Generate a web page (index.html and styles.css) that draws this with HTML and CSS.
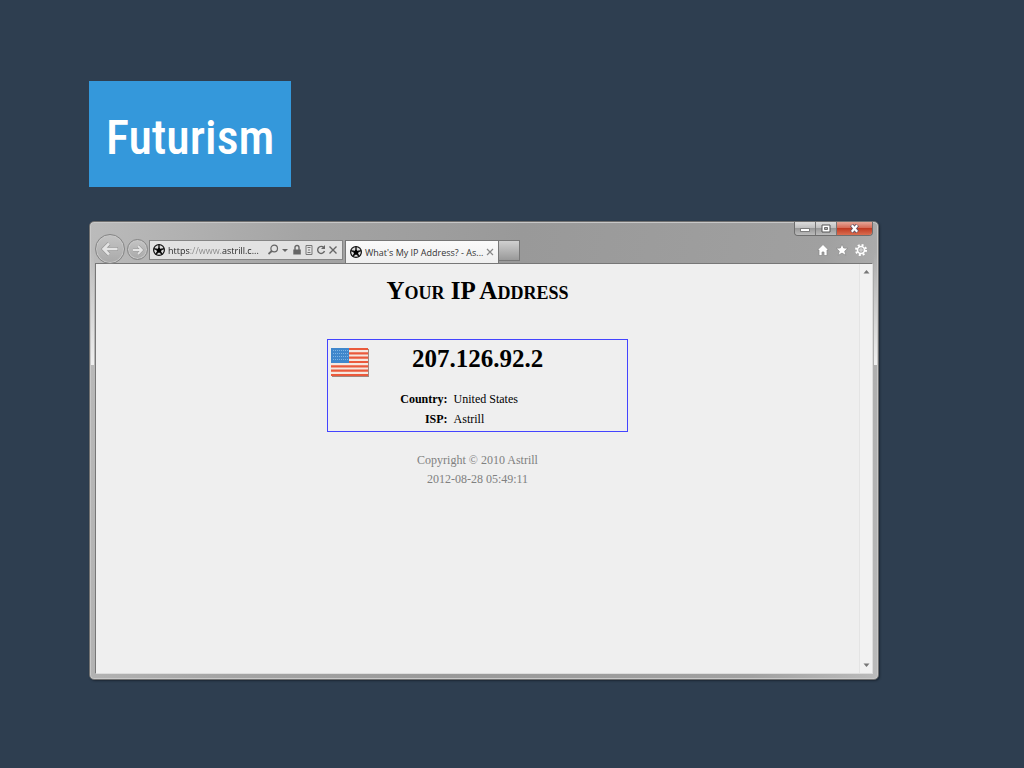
FILE: index.html
```
<!DOCTYPE html>
<html lang="en">
<head>
  <meta charset="UTF-8" />
  <meta name="viewport" content="width=device-width, initial-scale=1.0" />
  <title>Futurism</title>
  <link rel="stylesheet" href="styles.css">
</head>
<body>
  <svg class="symbols" width="0" height="0">
    <symbol id="ball" viewBox="0 0 12 12">
      <circle cx="6" cy="6" r="5.4" fill="#ddd" stroke="#111" stroke-width="1.2"/>
      <path d="M6 2.2l1.2 2.5 2.7.4-1.9 2 .5 2.8L6 8.600l-2.500 1.300.5-2.800-1.900-2 2.700-.4z" fill="#000"/>
      <path d="M6 .6v3M11.200 4.600L8 5.500M9.400 10.600L7.500 8M2.600 10.600L4.500 8M.8 4.600L4 5.500" stroke="#111" stroke-width="1.300"/>
    </symbol>
  </svg>

  <main class="page">
    <h1 class="brand">Futurism</h1>

    <section class="window">
      <header class="toolbar">
        <button class="nav-button back" aria-label="Back">
          <svg width="18" height="14" viewBox="0 0 18 14"><path d="M17 7H3M8 1.500L2.500 7 8 12.500" fill="none" stroke="#999" stroke-width="4"/><path d="M16.500 7H3M8 1.500L2.500 7 8 12.500" fill="none" stroke="#e4e4e4" stroke-width="2.500"/></svg>
        </button>
        <button class="nav-button forward" aria-label="Forward">
          <svg width="12" height="10" viewBox="0 0 12 10"><path d="M1 5h9M6 1l4 4-4 4" fill="none" stroke="#999" stroke-width="3"/><path d="M1 5h9M6 1l4 4-4 4" fill="none" stroke="#e4e4e4" stroke-width="1.800"/></svg>
        </button>

        <div class="address">
          <svg width="12" height="12"><use href="#ball"/></svg>
          <input class="url" type="text" value="https://www.astrill.c..." aria-label="Address">
          <button aria-label="Search"><svg width="12" height="12" viewBox="0 0 12 12"><circle cx="7.200" cy="4.500" r="3.300" fill="none" stroke="#666" stroke-width="1.200"/><path d="M4.800 7L1.500 10" stroke="#666" stroke-width="1.700"/></svg></button>
          <button aria-label="Show list"><svg width="12" height="12" viewBox="0 0 12 12"><path d="M3 5h6L6 8z" fill="#666"/></svg></button>
          <button aria-label="Security"><svg width="12" height="12" viewBox="0 0 12 12"><path d="M4 6V3.500a2 2 0 0 1 4 0V6" fill="none" stroke="#666" stroke-width="1.400"/><path d="M2.300 5.500h7.500v5H2.300z" fill="#666"/></svg></button>
          <button aria-label="Compatibility view"><svg width="12" height="12" viewBox="0 0 12 12"><path d="M3 5V1.500h6V5M4.500 3.500h3M3 7v3.500h6V7M4.500 8.500h3M2 6h2M5 6h2M8 6h2" fill="none" stroke="#777" stroke-width="1"/></svg></button>
          <button aria-label="Refresh"><svg width="12" height="12" viewBox="0 0 12 12"><path d="M8.800 3.600A3.500 3.500 0 1 0 9.500 7" fill="none" stroke="#666" stroke-width="1.400"/><path d="M10 1v4H6z" fill="#666"/></svg></button>
          <button aria-label="Stop"><svg width="12" height="12" viewBox="0 0 12 12"><path d="M2.500 2.500l7 7M9.500 2.500l-7 7" stroke="#666" stroke-width="1.400"/></svg></button>
        </div>

        <div class="tab">
          <svg width="12" height="12"><use href="#ball"/></svg>
          <span class="tab-title">What's My IP Address? - As...</span>
          <button aria-label="Close tab"><svg width="8" height="8" viewBox="0 0 8 8"><path d="M1 1l6 6M7 1L1 7" stroke="#888" stroke-width="1.200"/></svg></button>
        </div>
        <button class="new-tab" aria-label="New tab"></button>

        <div class="corner">
          <div class="caption">
            <button class="minimize" aria-label="Minimize"><svg width="12" height="8" viewBox="0 0 12 8"><path d="M1.500 3.500h9v3h-9z" fill="#fff" stroke="#666" stroke-width=".8"/></svg></button>
            <button class="maximize" aria-label="Maximize"><svg width="10" height="9" viewBox="0 0 10 9"><path d="M1 1h8v7H1z" fill="#fff" stroke="#555"/><path d="M3.500 3.500h3v2h-3z" fill="#aaa" stroke="#555" stroke-width=".8"/></svg></button>
            <button class="close" aria-label="Close"><svg width="11" height="9" viewBox="0 0 11 9"><path d="M2.500 1l6 7M8.500 1l-6 7" stroke="#656" stroke-width="4"/><path d="M2.800 1.300l5.400 6.400M8.200 1.300L2.800 7.700" stroke="#fff" stroke-width="2.200"/></svg></button>
          </div>
          <div class="tools">
            <button aria-label="Home"><svg width="14" height="14" viewBox="0 0 14 14"><path d="M7 1.500L1.500 7H3v5.500h3V9h2v3.500h3V7h1.500z" fill="#fff" stroke="#888" stroke-width=".7"/></svg></button>
            <button aria-label="Favorites"><svg width="14" height="14" viewBox="0 0 14 14"><path d="M7 1l1.700 4 4.300.3-3.300 2.800 1.100 4.300L7 10.100l-3.800 2.300 1.100-4.300L1 5.300 5.300 5z" fill="#fff" stroke="#888" stroke-width=".7"/></svg></button>
            <button aria-label="Tools"><svg width="14" height="14" viewBox="0 0 14 14"><circle cx="7" cy="7" r="5" fill="none" stroke="#fff" stroke-width="2" stroke-dasharray="2 1.930"/><circle cx="7" cy="7" r="3.500" fill="none" stroke="#fff" stroke-width="1.600"/><circle cx="7" cy="7" r="1.200" fill="none" stroke="#eee" stroke-width=".8"/></svg></button>
          </div>
        </div>
      </header>

      <div class="viewport">
        <article class="document">
          <h2>Your IP Address</h2>
          <div class="result">
            <svg class="flag" width="38" height="31" viewBox="0 0 38 31">
              <path d="M1 2h37v28H1z" fill="#a08880"/>
              <path d="M0 1h37v28H0z" fill="#f5e8e0"/>
              <path d="M0 2h37M0 6.400h37M0 10.700h37M0 15h37M0 19.300h37M0 23.600h37M0 28h37" stroke="#ea5a3c" stroke-width="2.200"/>
              <path d="M0 1h18v15H0z" fill="#3f87cc"/>
              <path d="M2 3.500h15M2 6.500h15M2 9.500h15M2 12.500h15" stroke="#7fb4e4" stroke-width="1" stroke-dasharray="1 1"/>
            </svg>
            <p class="ip">207.126.92.2</p>
            <table class="details">
              <tr><th scope="row">Country:</th><td>United States</td></tr>
              <tr><th scope="row">ISP:</th><td>Astrill</td></tr>
            </table>
          </div>
          <footer>Copyright © 2010 Astrill<br>2012-08-28 05:49:11</footer>
        </article>
        <div class="scrollbar">
          <svg width="7" height="5" viewBox="0 0 7 5"><path d="M.5 4.500h6L3.500 1z" fill="#777"/></svg>
          <svg width="7" height="5" viewBox="0 0 7 5"><path d="M.5 .5h6L3.500 4z" fill="#777"/></svg>
        </div>
      </div>
    </section>
  </main>
</body>
</html>
```
FILE: styles.css
```
* {
  box-sizing: border-box;
}
body {
  margin: 0;
  background-color: #2e3e50;
  font-family: "Open Sans", sans-serif;
}
button {
  display: flex;
  align-items: center;
  justify-content: center;
  padding: 0;
  border: none;
  background: none;
  cursor: pointer;
}
svg {
  display: block;
  flex: none;
}
.symbols {
  position: absolute;
}
.page {
  padding: 81px 145px 80px 89px;
}
.brand {
  width: fit-content;
  margin: 0 0 34px;
  padding: 17px 17px 9px;
  background-color: #3498db;
  color: white;
  font-family: "Roboto Condensed", "Liberation Sans Narrow", sans-serif;
  font-size: 48px;
  font-weight: 500;
  line-height: 80px;
}
.window {
  padding: 0 5px 5px;
  border: 1px solid #707070;
  border-radius: 5px;
  background: linear-gradient(#f0f0f000, #f0f0f0) 1px 30px / 3px 113px no-repeat,
    linear-gradient(#f0f0f000, #f0f0f0) right 1px top 30px / 3px 113px no-repeat,
    linear-gradient(100deg, #bbb, #a4a4a4 25%, #999 50%, #a0a0a0 85%, #bbb);
  box-shadow: inset 0 0 0 1px #c8c8c8, 1px 1px 2px #1c2733;
}
.toolbar {
  display: flex;
  height: 41px;
  align-items: flex-end;
}
.nav-button {
  flex: none;
  border: 1px solid #858585;
  border-radius: 50%;
  background: linear-gradient(#c4c4c4, #a9a9a9);
  box-shadow: inset 0 0 0 1px #c8c8c8;
}
.back {
  width: 30px;
  height: 30px;
  margin-bottom: -1px;
}
.forward {
  width: 21px;
  height: 21px;
  margin: 0 1px 3px 2px;
}
.address {
  display: flex;
  align-items: center;
  width: 194px;
  height: 20px;
  margin-bottom: 3px;
  padding: 0 3px 0 3px;
  border: 1px solid #858585;
  background-color: #e2e2e2;
}
.url {
  flex: 1;
  min-width: 0;
  padding: 0 0 0 3px;
  border: none;
  outline: none;
  background: linear-gradient(90deg, #222 25px, #888 25px, #888 57px, #222 57px);
  background-clip: text;
  color: transparent;
  font: 9px "Open Sans", sans-serif;
}
.tab {
  display: flex;
  align-items: center;
  gap: 3px;
  width: 154px;
  height: 23px;
  margin-left: 2px;
  padding: 0 4px;
  border: 1px solid #777;
  border-bottom: none;
  background: linear-gradient(#fafafa, #efefef);
}
.tab-title {
  flex: 1;
  color: #333;
  font-size: 9px;
  white-space: nowrap;
}
.new-tab {
  width: 21px;
  height: 21px;
  margin-bottom: 2px;
  border: 1px solid #777;
  border-left: none;
  background: linear-gradient(#d0d0d0, #999);
}
.corner {
  display: flex;
  flex-direction: column;
  align-items: flex-end;
  justify-content: space-between;
  height: 41px;
  margin-left: auto;
  padding-bottom: 6px;
}
.caption {
  display: flex;
  border: 1px solid #6e6e6e;
  border-top: none;
  border-radius: 0 0 4px 4px;
  overflow: hidden;
}
.caption button {
  width: 21px;
  height: 13px;
  border-right: 1px solid #777;
  background: linear-gradient(#ddd, #bbb 50%, #999 50%, #bbb);
}
.caption .close {
  width: 35px;
  border-right: none;
  background: linear-gradient(#e6a697, #d66a55 45%, #c13b22 50%, #d96d50);
}
.tools {
  display: flex;
  gap: 5px;
  padding-right: 5px;
}
.viewport {
  display: flex;
  min-height: 411px;
  border: 1px solid #777;
  border-right-color: #ddd;
  border-bottom-color: #ddd;
  background-color: #efefef;
}
.document {
  flex: 1;
  color: #000;
  font-family: "Liberation Serif", serif;
  text-align: center;
}
.document h2 {
  margin: 11px 0 33px;
  font-size: 25px;
  font-variant: small-caps;
  line-height: 31px;
}
.result {
  position: relative;
  width: 301px;
  margin: 0 auto;
  padding: 4px 0 1px;
  border: 1px solid #4444ff;
}
.flag {
  position: absolute;
  top: 7px;
  left: 3px;
}
.ip {
  margin: 0 0 16px;
  font-size: 25px;
  font-weight: bold;
  line-height: 30px;
}
.details {
  width: 100%;
  border-collapse: collapse;
  font-size: 12px;
  line-height: 18px;
}
.details th {
  width: 40%;
  padding: 0 0 2px;
  text-align: right;
}
.details td {
  padding: 0 0 2px 6px;
  text-align: left;
}
.document footer {
  margin-top: 19px;
  color: #808080;
  font-size: 12px;
  line-height: 19px;
}
.scrollbar {
  display: flex;
  flex-direction: column;
  align-items: center;
  justify-content: space-between;
  width: 13px;
  padding: 5px 0;
  border-left: 1px solid #e4e4e4;
  background-color: #f2f2f2;
}
```
